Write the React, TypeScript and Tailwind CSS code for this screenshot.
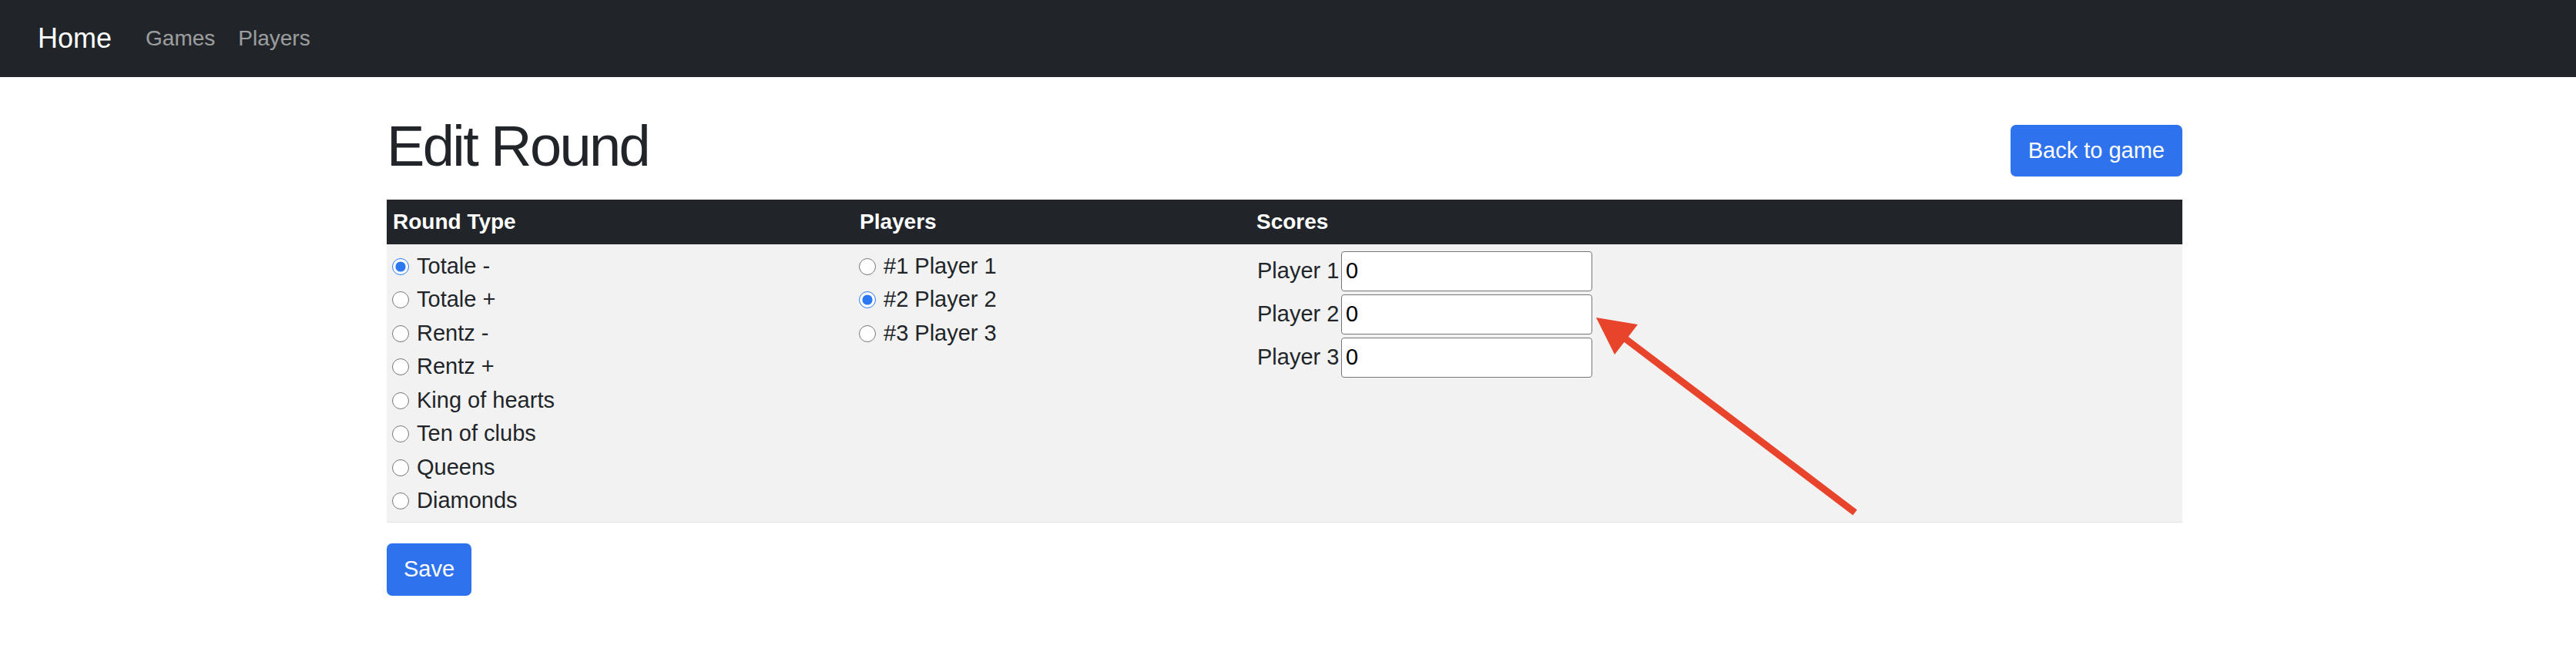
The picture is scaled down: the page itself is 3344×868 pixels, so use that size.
import React from "react";

const roundTypes = [
  "Totale -",
  "Totale +",
  "Rentz -",
  "Rentz +",
  "King of hearts",
  "Ten of clubs",
  "Queens",
  "Diamonds",
];

const players = [
  { id: 1, name: "Player 1", score: 0 },
  { id: 2, name: "Player 2", score: 0 },
  { id: 3, name: "Player 3", score: 0 },
];

function Radio({ name, label, checked }: { name: string; label: string; checked?: boolean }) {
  return (
    <label className="flex h-[43.5px] items-center gap-[10px]">
      <input
        type="radio"
        name={name}
        defaultChecked={checked}
        className="m-0 h-[22px] w-[22px] shrink-0 accent-[#2b78f2]"
      />
      <span>{label}</span>
    </label>
  );
}

export default function App() {
  return (
    <div className="relative min-h-[868px] bg-white font-['Liberation_Sans',Arial,sans-serif] text-[#212529]">
      <nav className="flex h-[100px] items-center bg-[#212529] pl-[49px]">
        <a href="#" className="mr-[29px] text-[36px] leading-none text-white">
          Home
        </a>
        <a href="#" className="px-[15px] text-[28px] leading-none text-white/55">
          Games
        </a>
        <a href="#" className="px-[15px] text-[28px] leading-none text-white/55">
          Players
        </a>
      </nav>

      <main className="ml-[502px] w-[2331px] pt-[46px]">
        <div className="flex items-start justify-between">
          <h1 className="text-[74px] font-medium leading-[1.2] tracking-[-2.6px]">Edit Round</h1>
          <button className="mt-[16px] flex h-[67px] items-center rounded-[7px] bg-[#2e73ed] px-[23px] text-[29px] text-white">
            Back to game
          </button>
        </div>

        <table className="mt-[24px] w-full table-fixed border-collapse text-[29px] leading-[1.5]">
          <thead>
            <tr className="bg-[#212529] text-left text-[28px] font-bold leading-[44px] text-white">
              <th className="w-[606px] px-[8px] py-[7px]">Round Type</th>
              <th className="w-[515px] px-[8px] py-[7px]">Players</th>
              <th className="px-[8px] py-[7px]">Scores</th>
            </tr>
          </thead>
          <tbody>
            <tr className="border-b border-[#dee2e6] bg-[#f2f2f2]">
              <td className="px-[7px] pb-[5px] pt-[7px] align-top">
                {roundTypes.map((type, i) => (
                  <Radio key={type} name="roundType" label={type} checked={i === 0} />
                ))}
              </td>
              <td className="px-[7px] pb-[5px] pt-[7px] align-top">
                {players.map((p) => (
                  <Radio key={p.id} name="player" label={`#${p.id} ${p.name}`} checked={p.id === 2} />
                ))}
              </td>
              <td className="px-[7px] pb-[5px] pt-[7px] align-top">
                <div className="grid grid-cols-[111px_326px]">
                  {players.map((p) => (
                    <React.Fragment key={p.id}>
                      <span className="flex h-[56px] items-center pl-[2px]">{p.name}</span>
                      <div className="flex h-[56px] items-center">
                        <input
                          type="text"
                          defaultValue={p.score}
                          className="h-[52px] w-full rounded-[4px] border border-[#767676] bg-white px-[5px] text-[29px] text-black outline-none"
                        />
                      </div>
                    </React.Fragment>
                  ))}
                </div>
              </td>
            </tr>
          </tbody>
        </table>

        <button className="mt-[27px] flex h-[68px] items-center rounded-[7px] bg-[#2e73ed] px-[22px] text-[29px] text-white">
          Save
        </button>
      </main>

      <svg
        className="pointer-events-none absolute left-[2060px] top-[400px] h-[280px] w-[360px]"
        viewBox="0 0 360 280"
      >
        <line x1="348" y1="265" x2="48" y2="38" stroke="#e8432b" strokeWidth="9" />
        <polygon points="12,12 66,21 36,60" fill="#e8432b" />
      </svg>
    </div>
  );
}
